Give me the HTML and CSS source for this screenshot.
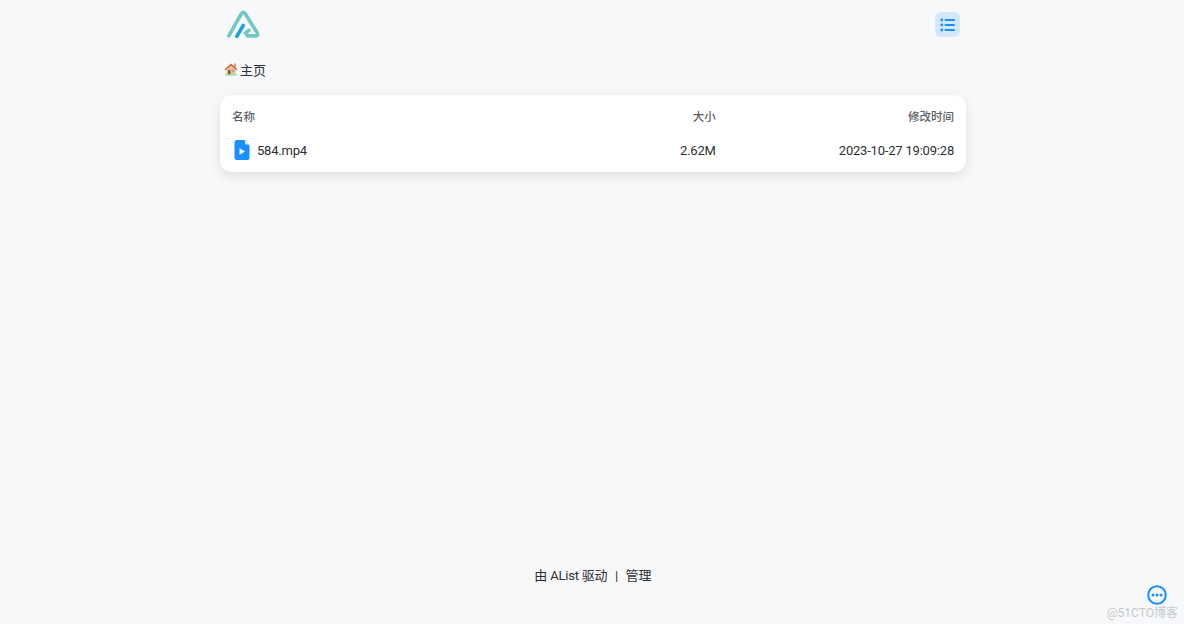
FILE: index.html
```html
<!DOCTYPE html>
<html lang="zh-CN">
<head>
    <meta charset="UTF-8">
    <meta name="viewport" content="width=device-width, initial-scale=1.0">
    <title>主页 | AList</title>
    <link rel="stylesheet" href="styles.css">
</head>
<body>
    <div class="page">
        <header class="header">
            <a class="logo" href="#">
                <svg width="38" height="32" viewBox="0 0 38 32" fill="none">
                    <path d="M4.800 27.800 17.500 5.500Q19.300 3 21.100 5.500L33.300 25Q34.500 27.900 31.800 27.900H23.500L21.500 25 25 22.300" stroke="#73c9c1" stroke-width="3.600" stroke-linecap="round" stroke-linejoin="round"/>
                    <path d="M12.800 28.300 19.200 17.500" stroke="#1ba0e2" stroke-width="3.600" stroke-linecap="round"/>
                </svg>
            </a>
            <button class="layout-btn">
                <svg width="16" height="16" viewBox="0 0 16 16" fill="#1890ff">
                    <circle cx="1.800" cy="3" r="1.400"/>
                    <circle cx="1.800" cy="8" r="1.400"/>
                    <circle cx="1.800" cy="13" r="1.400"/>
                    <rect x="4.500" y="2" width="10.500" height="2" rx="1"/>
                    <rect x="4.500" y="7" width="10.500" height="2" rx="1"/>
                    <rect x="4.500" y="12" width="10.500" height="2" rx="1"/>
                </svg>
            </button>
        </header>

        <nav class="crumb">
            <svg class="house" width="14" height="14" viewBox="0 0 14 14">
                <rect x="10" y="1.500" width="2" height="4" fill="#c9a26b"/>
                <path d="M2.500 6.500 7 3l4.500 3.500V12.500h-9z" fill="#e8c48d"/>
                <path d="M0.500 7.500 7 1.500l6.500 6-1 .8L7 3.500 1.500 8.300z" fill="#d9573f"/>
                <rect x="4" y="8" width="2.500" height="4.500" fill="#8a5a35"/>
                <rect x="8" y="7.500" width="2.500" height="2.500" fill="#7fb5d6"/>
                <rect x="1" y="12.300" width="12" height="1.200" fill="#7fdc9f"/>
            </svg>
            <a href="#">主页</a>
        </nav>

        <main class="card">
            <div class="row head">
                <div class="col-name">名称</div>
                <div class="col-size">大小</div>
                <div class="col-time">修改时间</div>
            </div>
            <div class="row body-row">
                <div class="col-name file">
                    <svg width="20" height="20" viewBox="0 0 20 20">
                        <path d="M5 0H12.300L17.500 5.200V18A2 2 0 0 1 15.500 20H5A2.500 2.500 0 0 1 2.500 18V2.500A2.500 2.500 0 0 1 5 0Z" fill="#1890ff"/>
                        <path d="M13 .3 17.300 4.600H14A1 1 0 0 1 13 3.600Z" fill="#cfe6ff"/>
                        <path d="M7.500 8.200 13 11.500 7.500 14.800Z" fill="#fff"/>
                    </svg>
                    <span>584.mp4</span>
                </div>
                <div class="col-size">2.62M</div>
                <div class="col-time">2023-10-27 19:09:28</div>
            </div>
        </main>

        <footer class="footer">
            <span class="powered">由 AList 驱动</span>
            <span class="sep">|</span>
            <a href="#">管理</a>
        </footer>
    </div>

    <button class="more-btn">
        <svg width="20" height="20" viewBox="0 0 20 20" fill="#1890ff">
            <circle cx="10" cy="10" r="8.800" fill="none" stroke="#1890ff" stroke-width="2"/>
            <circle cx="6" cy="10" r="1.500"/>
            <circle cx="10" cy="10" r="1.500"/>
            <circle cx="14" cy="10" r="1.500"/>
        </svg>
    </button>
    <div class="watermark">@51CTO博客</div>
</body>
</html>
```

FILE: styles.css
```css
* {
    box-sizing: border-box;
}

html, body {
    height: 100%;
}

body {
    margin: 0;
    padding-left: 2px;
    overflow: hidden;
    background-color: #f7f8fa;
    color: #2c2f33;
    font-family: Roboto, "Noto Sans CJK SC", sans-serif;
    font-size: 13px;
}

a {
    color: inherit;
    text-decoration: none;
}

.page {
    width: 746px;
    height: 100%;
    margin: 0 auto;
    display: flex;
    flex-direction: column;
}

.header {
    height: 45px;
    padding: 8px 6px 0 4px;
    display: flex;
    justify-content: space-between;
    align-items: flex-start;
}

.logo {
    display: block;
    height: 32px;
}

.layout-btn {
    width: 25px;
    height: 25px;
    margin-top: 4px;
    border: none;
    border-radius: 6px;
    padding: 0;
    background-color: #d3e8fd;
    display: flex;
    justify-content: center;
    align-items: center;
}

.crumb {
    height: 48px;
    margin-bottom: 2px;
    padding-left: 4px;
    display: flex;
    align-items: center;
    font-size: 13px;
}

.house {
    margin-right: 2px;
}

.card {
    background: #fff;
    border-radius: 12px;
    box-shadow: 0 4px 12px rgba(0, 0, 0, 0.1);
    padding: 4px 12px;
    height: 77px;
}

.row {
    height: 34px;
    display: flex;
    align-items: center;
}

.head {
    color: #5c5f66;
    font-weight: 500;
    font-size: 11.500px;
}

.body-row {
    letter-spacing: -0.2px;
}

.col-name {
    width: 50%;
}

.col-size {
    width: 17%;
    text-align: right;
}

.col-time {
    flex: 1;
    text-align: right;
}

.file {
    display: flex;
    align-items: center;
    gap: 5px;
}

.footer {
    margin-top: auto;
    padding-bottom: 38px;
    display: flex;
    justify-content: center;
    gap: 7.500px;
    line-height: 20px;
}

.powered {
    letter-spacing: -0.2px;
}

.more-btn {
    position: absolute;
    left: 1147px;
    top: 585px;
    width: 20px;
    height: 20px;
    padding: 0;
    border: none;
    background: none;
}

.watermark {
    position: absolute;
    right: 6px;
    top: 603px;
    color: #c6c8cb;
    font-size: 12px;
}
```
